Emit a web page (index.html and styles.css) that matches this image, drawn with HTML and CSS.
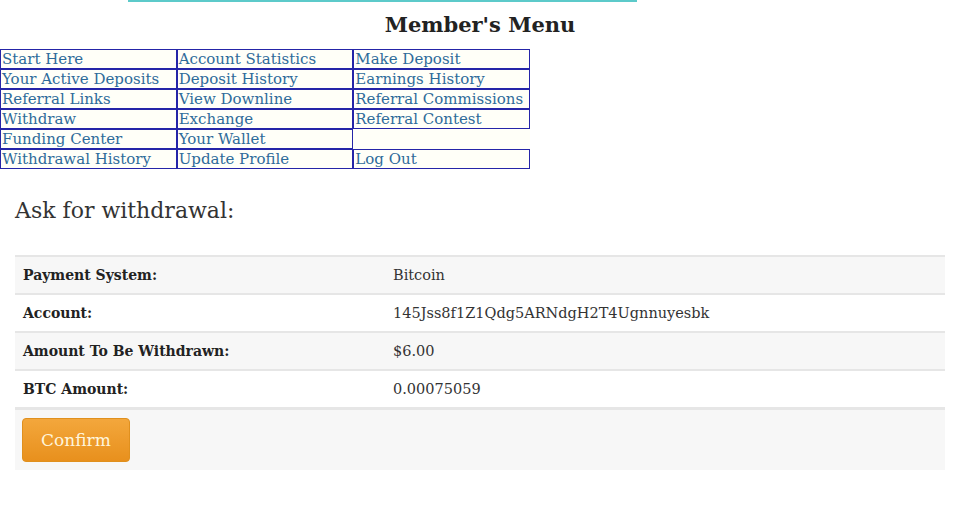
FILE: index.html
```html
<!DOCTYPE html>
<html lang="en">
<head>
    <meta charset="UTF-8">
    <meta name="viewport" content="width=device-width, initial-scale=1.0">
    <title>Ask for withdrawal</title>
    <link rel="stylesheet" href="styles.css">
</head>
<body>
    <div class="top-line"></div>
    <h2 class="menu-title">Member's Menu</h2>
    <table class="member-menu">
        <tr>
            <td><a href="#">Start Here</a></td>
            <td><a href="#">Account Statistics</a></td>
            <td><a href="#">Make Deposit</a></td>
        </tr>
        <tr>
            <td><a href="#">Your Active Deposits</a></td>
            <td><a href="#">Deposit History</a></td>
            <td><a href="#">Earnings History</a></td>
        </tr>
        <tr>
            <td><a href="#">Referral Links</a></td>
            <td><a href="#">View Downline</a></td>
            <td><a href="#">Referral Commissions</a></td>
        </tr>
        <tr>
            <td><a href="#">Withdraw</a></td>
            <td><a href="#">Exchange</a></td>
            <td><a href="#">Referral Contest</a></td>
        </tr>
        <tr>
            <td><a href="#">Funding Center</a></td>
            <td><a href="#">Your Wallet</a></td>
            <td></td>
        </tr>
        <tr>
            <td><a href="#">Withdrawal History</a></td>
            <td><a href="#">Update Profile</a></td>
            <td><a href="#">Log Out</a></td>
        </tr>
    </table>

    <div class="content">
        <h3 class="page-title">Ask for withdrawal:</h3>
        <table class="withdraw-table">
            <tr>
                <th>Payment System:</th>
                <td>Bitcoin</td>
            </tr>
            <tr>
                <th>Account:</th>
                <td>145Jss8f1Z1Qdg5ARNdgH2T4Ugnnuyesbk</td>
            </tr>
            <tr>
                <th>Amount To Be Withdrawn:</th>
                <td>$6.00</td>
            </tr>
            <tr>
                <th>BTC Amount:</th>
                <td>0.00075059</td>
            </tr>
            <tr class="actions">
                <td colspan="2"><button class="btn-confirm">Confirm</button></td>
            </tr>
        </table>
    </div>
</body>
</html>
```

FILE: styles.css
```css
body {
    font-family: 'DejaVu Serif', 'Liberation Serif', serif;
    margin: 0;
    padding: 0;
    background: #fff;
    color: #333;
}
.top-line {
    margin-left: 128px;
    width: 509px;
    height: 2px;
    background-color: #5ccaca;
}
.menu-title {
    margin: 8px 0 9px;
    text-align: center;
    font-size: 21px;
    line-height: 30px;
    color: #222;
}
.member-menu {
    border-collapse: separate;
    border-spacing: 0;
    empty-cells: hide;
    table-layout: fixed;
    width: 530px;
    background-color: #fffff8;
}
.member-menu td {
    border: 1px solid #2525a8;
    padding: 1px 1px 0;
    height: 16.4px;
    font-size: 15px;
    line-height: 17px;
    white-space: nowrap;
    overflow: hidden;
}
.member-menu a {
    color: #2e6b9a;
    text-decoration: none;
}
.content {
    padding: 0 15px;
}
.page-title {
    margin: 27px 0 29px;
    font-size: 22px;
    font-weight: normal;
    line-height: 30px;
    color: #333;
}
.withdraw-table {
    width: 100%;
    border-collapse: collapse;
    font-size: 14.5px;
}
.withdraw-table th,
.withdraw-table td {
    border-top: 2px solid #e6e6e6;
    padding: 8px 8px;
    height: 20px;
    line-height: 20px;
    text-align: left;
    vertical-align: middle;
}
.withdraw-table th {
    width: 354px;
    font-size: 14px;
    color: #222;
}
.withdraw-table tr:nth-child(odd) {
    background-color: #f7f7f7;
}
.withdraw-table .actions td {
    padding: 8px 7px;
    border-top-width: 3px;
}
.btn-confirm {
    font-family: 'DejaVu Serif', 'Liberation Serif', serif;
    font-size: 17px;
    color: #fff5dc;
    background: linear-gradient(to bottom, #f3a73c, #e8901d);
    border: 1px solid #e0901e;
    border-radius: 4px;
    padding: 11px 18px;
    line-height: 20px;
    cursor: pointer;
}
```
